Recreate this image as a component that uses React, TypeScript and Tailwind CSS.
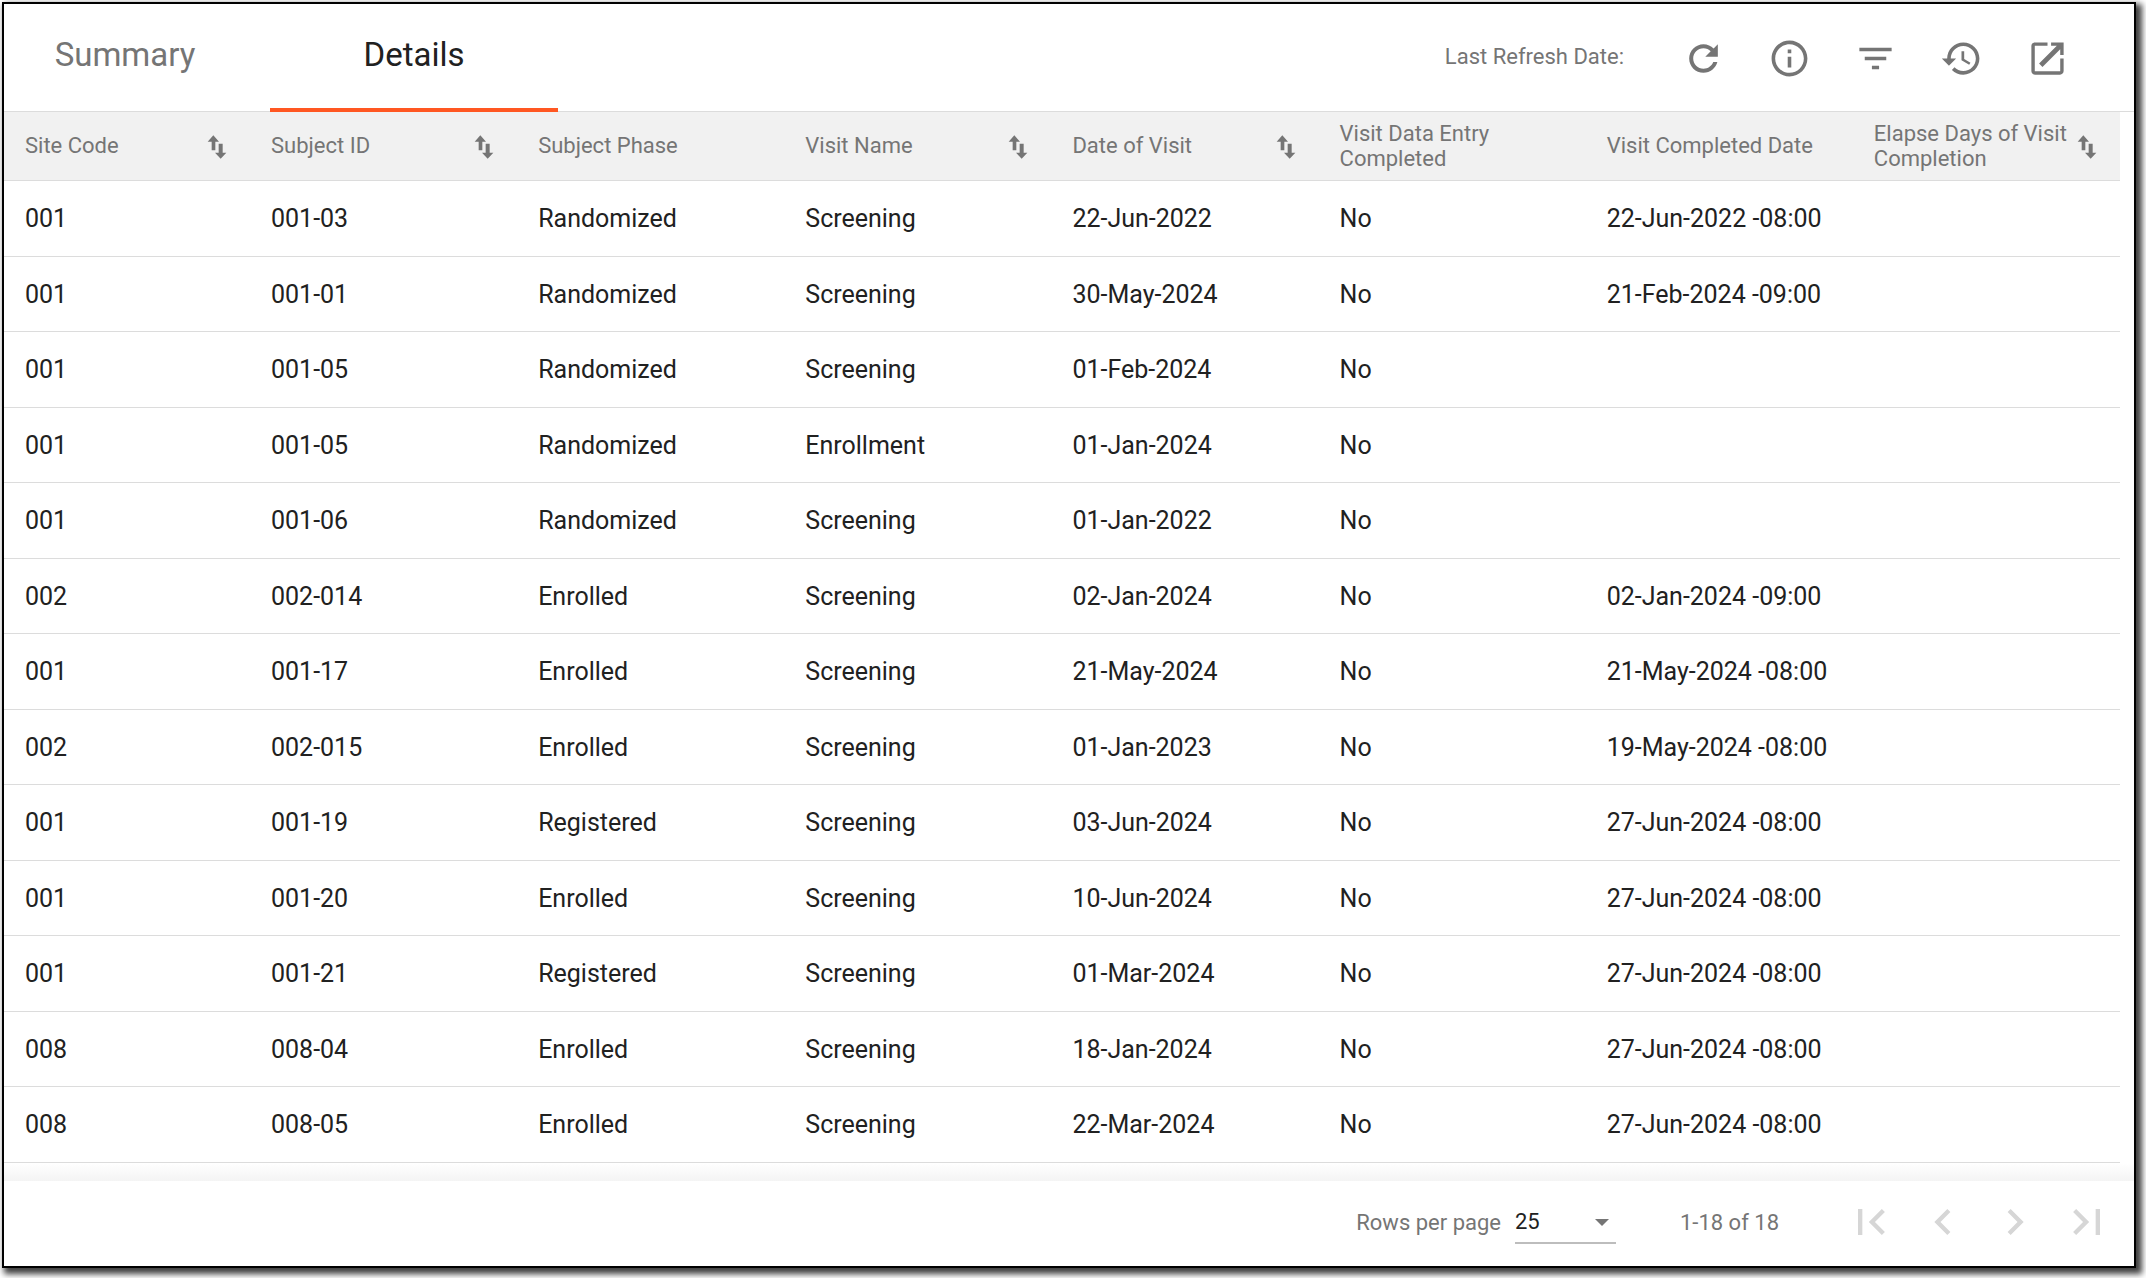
import React from "react";

type Column = { label: string; sortable: boolean };

const columns: Column[] = [
  { label: "Site Code", sortable: true },
  { label: "Subject ID", sortable: true },
  { label: "Subject Phase", sortable: false },
  { label: "Visit Name", sortable: true },
  { label: "Date of Visit", sortable: true },
  { label: "Visit Data Entry Completed", sortable: false },
  { label: "Visit Completed Date", sortable: false },
  { label: "Elapse Days of Visit Completion", sortable: true },
];

const rows: string[][] = [
  ["001", "001-03", "Randomized", "Screening", "22-Jun-2022", "No", "22-Jun-2022 -08:00", ""],
  ["001", "001-01", "Randomized", "Screening", "30-May-2024", "No", "21-Feb-2024 -09:00", ""],
  ["001", "001-05", "Randomized", "Screening", "01-Feb-2024", "No", "", ""],
  ["001", "001-05", "Randomized", "Enrollment", "01-Jan-2024", "No", "", ""],
  ["001", "001-06", "Randomized", "Screening", "01-Jan-2022", "No", "", ""],
  ["002", "002-014", "Enrolled", "Screening", "02-Jan-2024", "No", "02-Jan-2024 -09:00", ""],
  ["001", "001-17", "Enrolled", "Screening", "21-May-2024", "No", "21-May-2024 -08:00", ""],
  ["002", "002-015", "Enrolled", "Screening", "01-Jan-2023", "No", "19-May-2024 -08:00", ""],
  ["001", "001-19", "Registered", "Screening", "03-Jun-2024", "No", "27-Jun-2024 -08:00", ""],
  ["001", "001-20", "Enrolled", "Screening", "10-Jun-2024", "No", "27-Jun-2024 -08:00", ""],
  ["001", "001-21", "Registered", "Screening", "01-Mar-2024", "No", "27-Jun-2024 -08:00", ""],
  ["008", "008-04", "Enrolled", "Screening", "18-Jan-2024", "No", "27-Jun-2024 -08:00", ""],
  ["008", "008-05", "Enrolled", "Screening", "22-Mar-2024", "No", "27-Jun-2024 -08:00", ""],
];

function Icon({ d, className }: { d: string; className: string }) {
  return (
    <svg viewBox="0 0 24 24" className={className} fill="currentColor" aria-hidden="true">
      <path d={d} />
    </svg>
  );
}

function SortIcon() {
  return (
    <svg viewBox="0 0 96 96" className="size-8" fill="currentColor" aria-hidden="true">
      <path d="M37 13L54 32H43V58H32V32H20Z" />
      <path d="M59 83L42 65H53V38H65V65H76Z" />
    </svg>
  );
}

const tools = [
  {
    label: "Refresh",
    d: "M17.65 6.35C16.2 4.9 14.21 4 12 4c-4.42 0-7.99 3.58-7.99 8s3.57 8 7.99 8c3.73 0 6.84-2.55 7.73-6h-2.3c-.82 2.2-2.9 3.75-5.43 3.75-3.2 0-5.75-2.57-5.75-5.75S8.8 6.25 12 6.25c1.6 0 3 .64 4.02 1.7L13 11h7V4l-2.35 2.35z",
  },
  {
    label: "Information",
    d: "M11 7h2v2h-2zm0 4h2v6h-2zm1-9C6.48 2 2 6.48 2 12s4.48 10 10 10 10-4.48 10-10S17.52 2 12 2zm0 18c-4.41 0-8-3.59-8-8s3.59-8 8-8 8 3.59 8 8-3.59 8-8 8z",
  },
  { label: "Filter", d: "M10 18h4v-2h-4v2zM3 6v2h18V6H3zm3 7h12v-2H6v2z" },
  {
    label: "History",
    d: "M13 3c-4.97 0-9 4.03-9 9H1l3.89 3.89.07.14L9 12H6c0-3.87 3.13-7 7-7s7 3.13 7 7-3.13 7-7 7c-1.93 0-3.68-.79-4.94-2.06l-1.42 1.42C8.27 19.99 10.51 21 13 21c4.97 0 9-4.03 9-9s-4.03-9-9-9zm-1 5v5l4.28 2.54.72-1.21-3.5-2.08V8H12z",
  },
  {
    label: "Open in new window",
    d: "M12 3v1.9H4.9v14.2h14.2V12H21v7c0 1.1-.9 2-2 2H5c-1.1 0-2-.9-2-2V5c0-1.1.9-2 2-2h7zM14 3v1.9h3.2l-9.9 9.9 1.9 1.9 9.9-9.9V10H21V3h-7z",
  },
];

const pagers = [
  { label: "First page", d: "M18.41 16.59L13.82 12l4.59-4.59L17 6l-6 6 6 6zM6 6h2v12H6z" },
  { label: "Previous page", d: "M15.41 7.41L14 6l-6 6 6 6 1.41-1.41L10.83 12z" },
  { label: "Next page", d: "M10 6L8.59 7.41 13.17 12l-4.58 4.59L10 18l6-6z" },
  { label: "Last page", d: "M5.59 7.41L10.18 12l-4.59 4.59L7 18l6-6-6-6zM16 6h2v12h-2z" },
];

export default function App() {
  return (
    <div className="min-h-screen bg-white pt-0.5 pr-2.5 pb-2.5 pl-0.5 font-[Roboto,sans-serif] text-[#212121]">
      <div className="border-2 border-black bg-white shadow-[4px_4px_6px_2px_rgba(0,0,0,0.75)]">
        <header className="flex h-[108px] items-stretch justify-between border-b border-[#dcdcdc]">
          <nav role="tablist" className="-mb-px flex">
            <button role="tab" aria-selected="false" className="w-[266px] border-b-4 border-transparent pr-6 pb-0.5 text-center text-[33px] text-[#757575]">
              Summary
            </button>
            <button role="tab" aria-selected="true" className="w-[288px] border-b-4 border-[#ff5722] pb-0.5 text-center text-[33px]">
              Details
            </button>
          </nav>
          <div className="flex items-center pr-11">
            <span className="pr-9 pb-0.5 text-[22px] text-[#757575]">Last Refresh Date:</span>
            {tools.map((t) => (
              <button key={t.label} aria-label={t.label} className="flex w-[86px] justify-center pt-0.5 text-[#757575]">
                <Icon d={t.d} className="size-[43px]" />
              </button>
            ))}
          </div>
        </header>

        <div className="pr-3.5">
          <table className="w-full table-fixed border-collapse text-left">
            <thead className="bg-[#f1f1f1] text-[22px] leading-[25px] text-[#757575]">
              <tr className="h-[68px] border-b border-[#dcdcdc]">
                {columns.map((c) => (
                  <th key={c.label} scope="col" className="pr-[17px] pl-[21px] font-normal first:w-[246px]">
                    <div className="flex items-center justify-between">
                      <span>{c.label}</span>
                      {c.sortable && (
                        <button aria-label={`Sort by ${c.label}`} className="-ml-4 shrink-0 pt-0.5">
                          <SortIcon />
                        </button>
                      )}
                    </div>
                  </th>
                ))}
              </tr>
            </thead>
            <tbody className="text-[25px]">
              {rows.map((row, i) => (
                <tr key={i} className="border-b border-[#dcdcdc] odd:h-[76px] even:h-[75px]">
                  {row.map((cell, j) => (
                    <td key={j} className="pt-0.5 pl-[21px] whitespace-nowrap">
                      {cell}
                    </td>
                  ))}
                </tr>
              ))}
            </tbody>
          </table>
        </div>

        <div className="h-[18px] bg-linear-to-b from-white to-[#f4f4f4]" />

        <footer className="flex h-[85px] items-center justify-end pr-[21px] pb-0.5 text-[22px] text-[#757575]">
          <label htmlFor="rows-per-page" className="pr-3.5">
            Rows per page
          </label>
          <div className="relative mr-16 flex items-center">
            <select
              id="rows-per-page"
              defaultValue="25"
              className="h-11 w-[101px] appearance-none border-b-2 border-[#bdbdbd] text-[#212121]"
            >
              <option>25</option>
              <option>50</option>
              <option>100</option>
            </select>
            <svg viewBox="0 0 14 7" className="pointer-events-none absolute right-[7px] h-[7px] w-3.5" fill="currentColor" aria-hidden="true">
              <path d="M0 0h14L7 7z" />
            </svg>
          </div>
          <span className="pr-[66px]">1-18 of 18</span>
          <div className="flex gap-5 text-[#d6d6d6]">
            {pagers.map((p) => (
              <button key={p.label} aria-label={p.label} disabled>
                <Icon d={p.d} className="size-[52px]" />
              </button>
            ))}
          </div>
        </footer>
      </div>
    </div>
  );
}
